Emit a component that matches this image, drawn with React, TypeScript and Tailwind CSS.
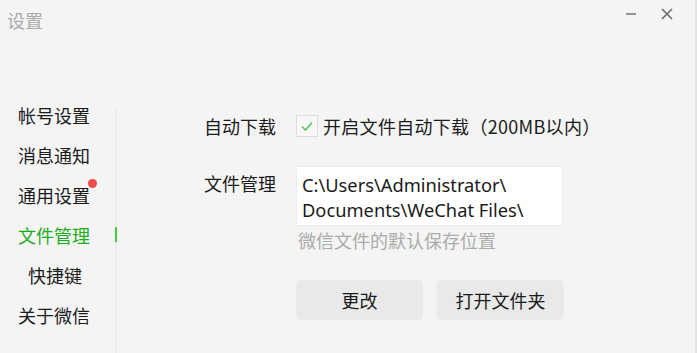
const font = { fontFamily: '"Noto Sans", "Noto Sans CJK SC", sans-serif' };

function Minimize() {
  return (
    <svg width="12" height="12" viewBox="0 0 12 12" className="text-[#7a7a7a]">
      <path d="M1 6h10" stroke="currentColor" strokeWidth="1.6" />
    </svg>
  );
}

function Close() {
  return (
    <svg width="12" height="12" viewBox="0 0 12 12" className="text-[#6a6a6a]">
      <path d="M1 1l10 10M11 1L1 11" stroke="currentColor" strokeWidth="1.6" />
    </svg>
  );
}

const navItems = [
  { label: '帐号设置' },
  { label: '消息通知' },
  { label: '通用设置', dot: true },
  { label: '文件管理', active: true },
  { label: '快捷键', indent: true },
  { label: '关于微信' },
];

export default function App() {
  return (
    <div
      className="w-[697px] h-[353px] bg-[#f4f4f4] border-r-2 border-[#e2e2e2] flex flex-col overflow-hidden text-[#1b1b1b]"
      style={{ fontFamily: '"Noto Sans CJK SC", sans-serif' }}
    >
      {/* Title bar */}
      <div className="h-[40px] flex items-start justify-between">
        <span className="pl-[7px] pt-[7px] text-[18px] leading-[26px] text-[#a9a9a9]">设置</span>
        <div className="flex items-center gap-[24px] pr-[22px] pt-[8px]">
          <Minimize />
          <Close />
        </div>
      </div>

      <div className="flex flex-1 pt-[55px]">
        {/* Sidebar */}
        <div className="w-[117px] flex flex-col relative">
          <span className="absolute right-0 top-[14px] bottom-0 w-[2px] bg-[#ebebeb]" />
          {navItems.map((item) => (
            <div
              key={item.label}
              className={`h-[40px] flex items-center relative ${item.indent ? 'pl-[28px]' : 'pl-[18px]'} ${
                item.active ? 'text-[#1aad19]' : ''
              }`}
            >
              <span className="text-[18px] leading-[24px] relative">
                {item.label}
                {item.dot && (
                  <span className="absolute -right-[7px] -top-[4px] w-[9px] h-[9px] rounded-full bg-[#f24a4a]" />
                )}
              </span>
              {item.active && (
                <span className="absolute right-0 top-[12px] w-[2px] h-[15px] bg-[#3ed03e]" />
              )}
            </div>
          ))}
        </div>

        {/* Content */}
        <div className="flex-1 pl-[87px] pt-[19px] flex flex-col">
          <div className="flex items-center h-[24px]">
            <span className="text-[18px] w-[92px]">自动下载</span>
            <span className="w-[22px] h-[22px] border border-[#dedede] bg-[#f7f7f7] flex items-center justify-center">
              <svg width="14" height="12" viewBox="0 0 14 12">
                <path d="M2 6.5l3.5 3.5L12 2.5" fill="none" stroke="#5cc65c" strokeWidth="1.6" />
              </svg>
            </span>
            <span className="text-[18px] ml-[5px] tracking-[0.3px]">开启文件自动下载（200MB以内）</span>
          </div>

          <div className="flex mt-[28px]">
            <span className="text-[18px] w-[92px] pt-[5px] leading-[24px]">文件管理</span>
            <div className="flex flex-col">
              <div
                className="w-[267px] h-[60px] bg-white border border-[#ececec] pl-[5px] pt-[5px] text-[18.3px] leading-[25px]"
                style={font}
              >
                <div>C:\Users\Administrator\</div>
                <div>Documents\WeChat Files\</div>
              </div>
              <span className="text-[18px] leading-[22px] text-[#ababab] mt-[3px] ml-[2px]">微信文件的默认保存位置</span>
            </div>
          </div>

          <div className="flex gap-[14px] mt-[29px] ml-[92px]">
            <button className="w-[127px] h-[40px] rounded-[5px] bg-[#e9e9e9] text-[18px]">更改</button>
            <button className="w-[127px] h-[40px] rounded-[5px] bg-[#e9e9e9] text-[18px]">打开文件夹</button>
          </div>
        </div>
      </div>
    </div>
  );
}
